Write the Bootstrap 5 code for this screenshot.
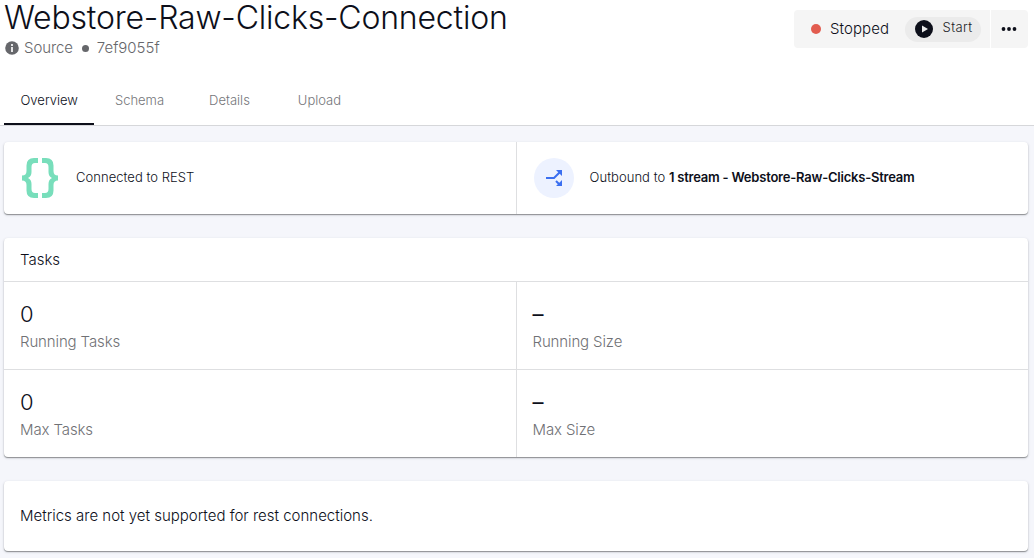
<!DOCTYPE html>
<html lang="en">
<head>
<meta charset="utf-8">
<meta name="viewport" content="width=device-width, initial-scale=1">
<title>Webstore-Raw-Clicks-Connection</title>
<link href="https://cdn.jsdelivr.net/npm/bootstrap@5.3.0/dist/css/bootstrap.min.css" rel="stylesheet">
<style>
  body { font-family: Inter, "Liberation Sans", sans-serif; font-weight: 300; font-size: 15px; line-height: 20px; color: #0d0f1a; background: #f5f6fb; height: 558px; overflow: hidden; }
  .page-head { height: 126px; border-bottom: 1px solid #d6d7da; padding-left: 4px; padding-right: 6px; }
  .page-title { font-size: 32px; font-weight: 300; line-height: 36px; letter-spacing: -.19px; margin: 0 0 2px; white-space: nowrap; }
  .meta { color: #66676b; height: 20px; padding-left: 1px; }
  .meta-kind { margin-left: 5px; letter-spacing: -.1px; }
  .meta-dot { width: 7px; height: 7px; background: #66676b; margin: 0 8px 0 9px; }
  .actions { margin-top: 10px; height: 38px; gap: 1px; }
  .status-box { background: #f5f5f5; width: 196px; border-radius: 4px 0 0 4px; padding-left: 17px; }
  .more-box { background: #f5f5f5; width: 37px; border: 0; border-radius: 0 4px 4px 0; }
  .status-dot { width: 10px; height: 10px; background: #e25c4f; margin-right: 9px; }
  .status-text { letter-spacing: .08px; }
  .start-btn { background: #ebebeb; width: 76px; height: 25px; border: 0; padding: 0 0 0 10px; font-size: 13px; font-weight: 300; color: #1a1b25; margin-left: 15.500px; }
  .start-text { margin: -4px 0 0 10px; letter-spacing: .4px; }
  .tabs { height: 50px; font-size: 13px; }
  .tabs .nav-link { color: #75767a; padding: 0 16.500px; height: 50px; line-height: 51px; font-weight: 300; }
  .tabs .nav-link.active { color: #0d0f1a; border-bottom: 2px solid #0d0f1a; }
  .tabs .tab-details { margin-left: 12px; }
  .tabs .tab-upload { margin-left: 15px; }
  .panel { background: #fff; border-radius: 4px; margin: 0 6px 24px 4px; box-shadow: 0 1px 1px #8f9194, 0 1px 3px rgba(40,45,60,.18); }
  .split > * + * { border-left: 1px solid #dedfe1; }
  .links { height: 72px; font-size: 13px; }
  .links > * { padding: 0 16px; }
  .link-text { padding-bottom: 2px; letter-spacing: .04px; }
  .links strong { font-weight: 600; letter-spacing: -.22px; }
  .stream-icon { width: 40px; height: 40px; background: #edf2ff; margin-right: 16px; margin-left: .6px; }
  .panel-head { height: 43px; line-height: 43px; padding-left: 16px; }
  .stat { height: 88px; padding: 19px 0 0 16px; border-top: 1px solid #dedfe1; }
  .stat + .stat { padding-left: 15.500px; }
  .stat-value { font-size: 22px; line-height: 26px; }
  .dash { font-weight: 400; }
  .stat-label { line-height: 20px; margin-top: 5px; color: #707175; letter-spacing: -.12px; }
  .metrics { height: 70px; padding-left: 16px; }
</style>
</head>
<body>
<header class="page-head bg-white d-flex flex-column">
  <div class="d-flex justify-content-between">
    <div>
      <h1 class="page-title">Webstore-Raw-Clicks-Connection</h1>
      <div class="meta d-flex align-items-center">
        <svg width="14" height="14" viewBox="0 0 14 14"><circle cx="7" cy="7" r="6.8" fill="#66676b"/><path d="M6 3h2v2H6zM6 6h2v5H6z" fill="#e5e5e6"/></svg>
        <span class="meta-kind">Source</span><span class="meta-dot rounded-circle"></span><span>7ef9055f</span>
      </div>
    </div>
    <div class="actions d-flex">
      <div class="status-box d-flex align-items-center">
        <span class="status-dot rounded-circle"></span><span class="status-text">Stopped</span>
        <button class="start-btn rounded-pill d-flex align-items-center" type="button">
          <svg width="18" height="18" viewBox="0 0 18 18"><circle cx="9" cy="9" r="9" fill="#0d0f1a"/><path d="M7 5.500v7L13 9z" fill="#ebebeb"/></svg>
          <span class="start-text">Start</span>
        </button>
      </div>
      <button class="more-box d-flex align-items-center justify-content-center p-0" type="button" aria-label="More">
        <svg width="17" height="4" viewBox="0 0 17 4" fill="#0d0f1a"><circle cx="2.500" cy="2" r="1.9"/><circle cx="8" cy="2" r="1.9"/><circle cx="13.500" cy="2" r="1.9"/></svg>
      </button>
    </div>
  </div>
  <nav class="nav tabs mt-auto flex-nowrap">
    <a class="nav-link active" href="#">Overview</a>
    <a class="nav-link ms-1" href="#">Schema</a>
    <a class="nav-link tab-details" href="#">Details</a>
    <a class="nav-link tab-upload" href="#">Upload</a>
  </nav>
</header>
<main class="pt-3">
  <section class="panel links split d-flex">
    <div class="w-50 d-flex align-items-center">
      <svg width="40" height="40" viewBox="0 0 40 40" class="me-3" fill="#78debb"><path id="brace" d="M18 0H14Q6.500 0 6.500 7.500V13Q6.500 17.500 2 17.500V22.500Q6.500 22.500 6.500 27V32.500Q6.500 40 14 40H18V35H15Q11.500 35 11.500 31V26Q11.500 21.500 8 20Q11.500 18.500 11.500 14V9Q11.500 5 15 5H18Z"/><use href="#brace" transform="matrix(-1 0 0 1 40 0)"/></svg>
      <span class="link-text">Connected to REST</span>
    </div>
    <div class="w-50 d-flex align-items-center">
      <span class="stream-icon rounded-circle d-flex align-items-center justify-content-center">
        <svg width="18" height="18" viewBox="0 0 18 18" fill="none" stroke="#3b6ff0" stroke-width="2"><path d="M1 9H9L15 3M11 12L15 16"/><path d="M11 1H17V7ZM17 11V17H11Z" fill="#3b6ff0" stroke="none"/></svg>
      </span>
      <span class="link-text">Outbound to <strong>1 stream - Webstore-Raw-Clicks-Stream</strong></span>
    </div>
  </section>
  <section class="panel">
    <div class="panel-head">Tasks</div>
    <div class="split row g-0">
      <div class="col-6 stat"><div class="stat-value">0</div><div class="stat-label">Running Tasks</div></div>
      <div class="col-6 stat"><div class="stat-value dash">–</div><div class="stat-label">Running Size</div></div>
    </div>
    <div class="split row g-0">
      <div class="col-6 stat"><div class="stat-value">0</div><div class="stat-label">Max Tasks</div></div>
      <div class="col-6 stat"><div class="stat-value dash">–</div><div class="stat-label">Max Size</div></div>
    </div>
  </section>
  <section class="panel metrics d-flex align-items-center"><span>Metrics are not yet supported for rest connections.</span></section>
</main>
<script src="https://cdn.jsdelivr.net/npm/bootstrap@5.3.0/dist/js/bootstrap.bundle.min.js"></script>
</body>
</html>
